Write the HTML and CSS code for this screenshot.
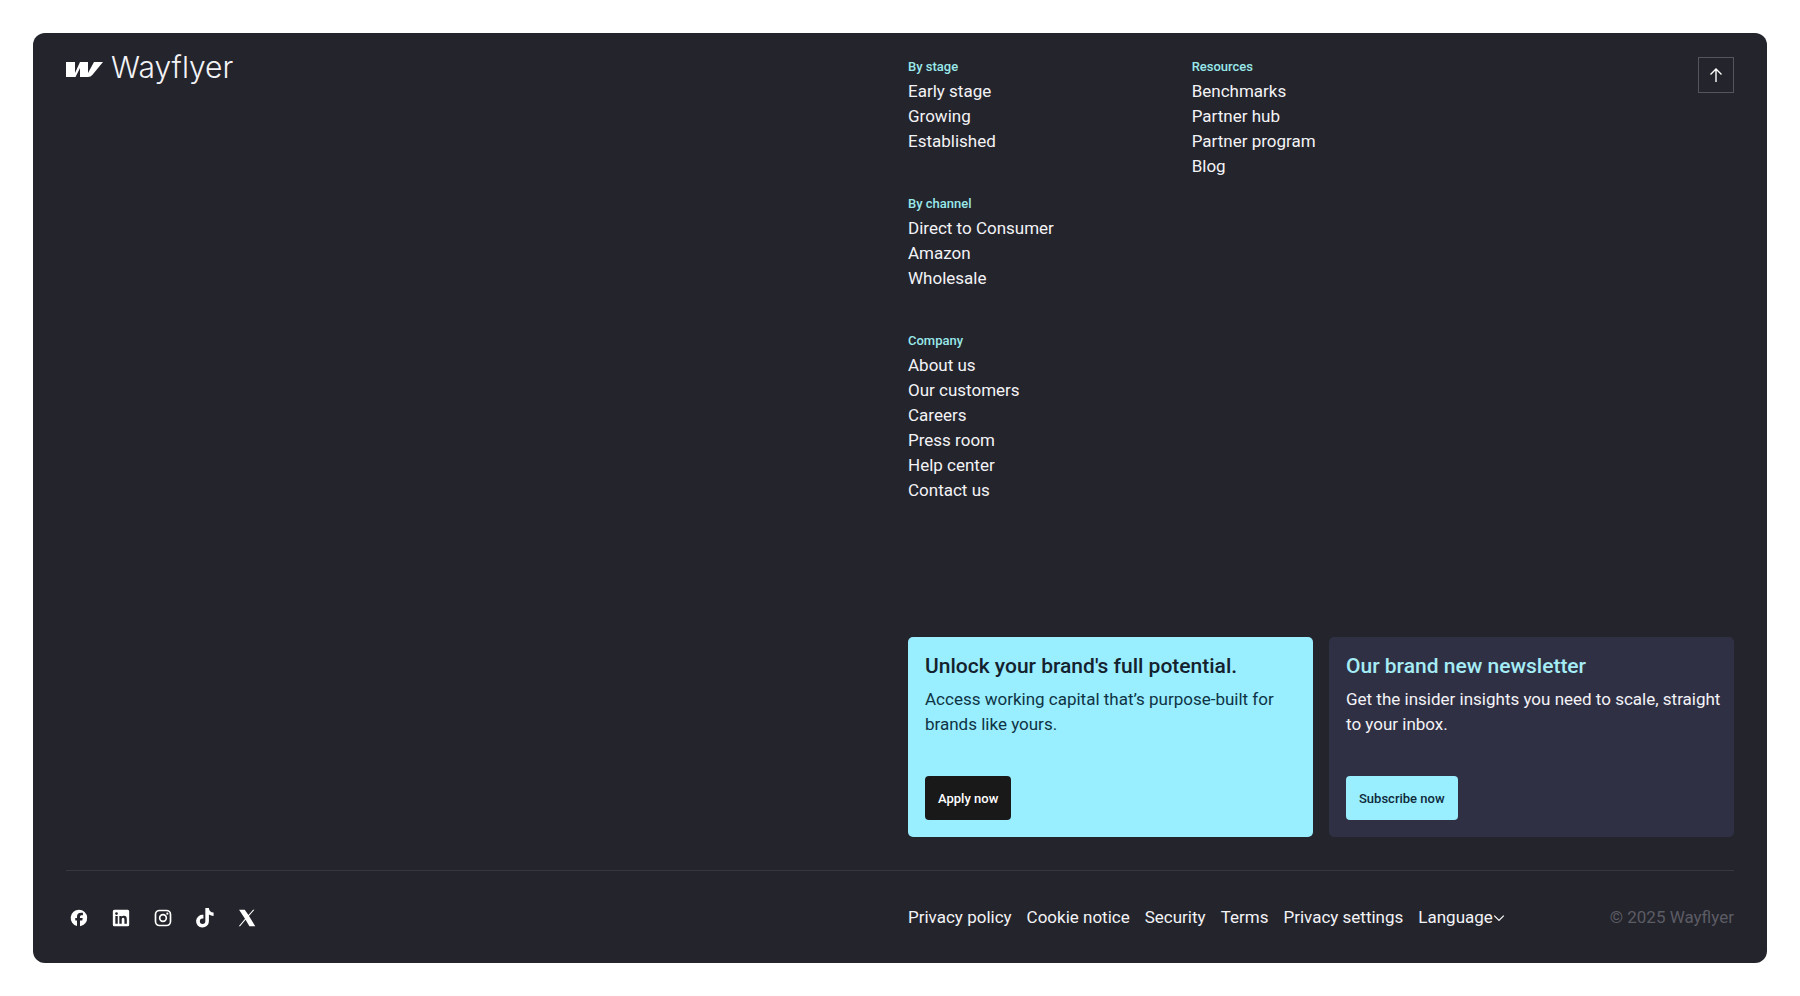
FILE: index.html
```html
<!DOCTYPE html>
<html lang="en">
<head>
  <meta charset="UTF-8">
  <meta name="viewport" content="width=device-width, initial-scale=1.0">
  <title>Wayflyer</title>
  <link rel="stylesheet" href="styles.css">
</head>
<body>
  <footer class="footer">
    <div class="footer-main">
      <a class="logo" href="#">
        <svg class="logo-mark" viewBox="0 0 37 15" aria-hidden="true">
          <path d="M0 0h9v11L14 0h8v11L28 0h9L26.500 12.800Q24.700 15 22 15h-8V6L9.500 15H0z"/>
        </svg>
        <span class="logo-text">Wayflyer</span>
      </a>

      <div class="footer-content">
        <div class="footer-nav">
          <nav class="nav-column">
            <div class="nav-group">
              <h2>By stage</h2>
              <ul>
                <li><a href="#">Early stage</a></li>
                <li><a href="#">Growing</a></li>
                <li><a href="#">Established</a></li>
              </ul>
            </div>
            <div class="nav-group">
              <h2>By channel</h2>
              <ul>
                <li><a href="#">Direct to Consumer</a></li>
                <li><a href="#">Amazon</a></li>
                <li><a href="#">Wholesale</a></li>
              </ul>
            </div>
            <div class="nav-group">
              <h2>Company</h2>
              <ul>
                <li><a href="#">About us</a></li>
                <li><a href="#">Our customers</a></li>
                <li><a href="#">Careers</a></li>
                <li><a href="#">Press room</a></li>
                <li><a href="#">Help center</a></li>
                <li><a href="#">Contact us</a></li>
              </ul>
            </div>
          </nav>
          <nav class="nav-column">
            <div class="nav-group">
              <h2>Resources</h2>
              <ul>
                <li><a href="#">Benchmarks</a></li>
                <li><a href="#">Partner hub</a></li>
                <li><a href="#">Partner program</a></li>
                <li><a href="#">Blog</a></li>
              </ul>
            </div>
          </nav>
          <button type="button" class="to-top" aria-label="Back to top">
            <svg viewBox="0 0 16 16" aria-hidden="true"><path d="M8 15V2M2.500 7.500 8 2l5.500 5.500"/></svg>
          </button>
        </div>

        <div class="cards">
          <section class="card card-apply">
            <h3>Unlock your brand's full potential.</h3>
            <p>Access working capital that’s purpose-built for brands like yours.</p>
            <button type="button" class="btn btn-dark">Apply now</button>
          </section>
          <section class="card card-newsletter">
            <h3>Our brand new newsletter</h3>
            <p>Get the insider insights you need to scale, straight to your inbox.</p>
            <button type="button" class="btn btn-cyan">Subscribe now</button>
          </section>
        </div>
      </div>
    </div>

    <div class="footer-bottom">
      <div class="social">
        <a href="#" aria-label="Facebook">
          <svg viewBox="0 0 24 24"><path d="M12 2a10 10 0 0 0-2.400 19.700v-6.600H7.500V12h2.100v-1.400c0-3.500 1.600-5 5-5 .6 0 1.700.1 2.100.2v2.900h-1.200c-1.700 0-2.300.6-2.300 2.300v1h3.300l-.6 3.100h-2.700v6.800A10 10 0 0 0 12 2z"/></svg>
        </a>
        <a href="#" aria-label="LinkedIn">
          <svg viewBox="0 0 24 24"><path fill-rule="evenodd" d="M4 2.200h16A1.800 1.800 0 0 1 21.800 4v16a1.800 1.800 0 0 1-1.800 1.800H4A1.800 1.800 0 0 1 2.200 20V4A1.800 1.800 0 0 1 4 2.200zM5.200 9.600v9.200h2.900V9.600zM6.600 5a1.700 1.700 0 1 0 0 3.400 1.700 1.700 0 0 0 0-3.400zM10 9.600v9.200h2.900v-4.600c0-1.300.3-2.400 1.700-2.400s1.500 1.300 1.500 2.500v4.500H19v-5.100c0-2.500-.6-4.400-3.500-4.400-1.300 0-2.300.7-2.700 1.500V9.600z"/></svg>
        </a>
        <a href="#" aria-label="Instagram">
          <svg viewBox="0 0 24 24"><path fill-rule="evenodd" d="M7.800 2h8.400A5.800 5.800 0 0 1 22 7.800v8.400a5.800 5.800 0 0 1-5.800 5.800H7.800A5.800 5.800 0 0 1 2 16.200V7.800A5.800 5.800 0 0 1 7.800 2zm0 2A3.800 3.800 0 0 0 4 7.800v8.400A3.800 3.800 0 0 0 7.800 20h8.400a3.800 3.800 0 0 0 3.800-3.800V7.800A3.800 3.800 0 0 0 16.200 4zM12 7a5 5 0 1 1 0 10 5 5 0 0 1 0-10zm0 2a3 3 0 1 0 0 6 3 3 0 0 0 0-6z"/><circle cx="17.200" cy="6.800" r="1.300"/></svg>
        </a>
        <a href="#" aria-label="TikTok">
          <svg viewBox="0 0 24 24"><path d="M16.700 0h-4.300v15.800a3.300 3.300 0 1 1-3.300-3.300c.4 0 .7 0 1 .1V8.200a7.700 7.700 0 1 0 6.600 7.600V7.700a9.800 9.800 0 0 0 5.600 1.800V5.300A5.600 5.600 0 0 1 16.700 0z"/></svg>
        </a>
        <a href="#" aria-label="X">
          <svg viewBox="0 0 24 24"><path d="M2.500 2.200h6.800l4.400 6.200 5.600-6.200h1.600l-6.500 7.300 7.500 12.300h-7L10.300 14l-6.600 7.800H2.100l7.500-8.900z"/></svg>
        </a>
      </div>

      <div class="footer-legal">
        <nav class="legal-links">
          <a href="#">Privacy policy</a>
          <a href="#">Cookie notice</a>
          <a href="#">Security</a>
          <a href="#">Terms</a>
          <a href="#">Privacy settings</a>
          <label class="language">
            <select aria-label="Language">
              <option>Language</option>
            </select>
            <svg viewBox="0 0 10 10" aria-hidden="true"><path d="M1 3l4 4 4-4"/></svg>
          </label>
        </nav>
        <span class="copyright">© 2025 Wayflyer</span>
      </div>
    </div>
  </footer>
</body>
</html>
```
FILE: styles.css
```css
* {
  box-sizing: border-box;
}
body {
  margin: 0;
  padding: 33px;
  min-height: 100vh;
  display: flex;
  background-color: #fff;
  font-family: Roboto, "Liberation Sans", sans-serif;
  font-size: 17px;
  line-height: 25px;
  color: #f3f3f6;
}
h2, h3, p, ul {
  margin: 0;
  padding: 0;
}
ul {
  list-style: none;
}
a {
  color: inherit;
  text-decoration: none;
}
a:hover {
  text-decoration: underline;
}
button, select {
  font-family: inherit;
  cursor: pointer;
}

.footer {
  flex: 1;
  display: flex;
  flex-direction: column;
  padding: 21px 33px 0;
  border-radius: 12px;
  background-color: #24242c;
}
.footer-main {
  flex: 1;
  display: grid;
  grid-template-columns: 1fr 1fr;
  gap: 16px;
  padding-bottom: 33px;
  border-bottom: 1px solid #37373f;
}

/* logo */
.logo {
  display: flex;
  align-items: flex-start;
  align-self: start;
  gap: 8px;
}
.logo-mark {
  width: 37px;
  height: 15px;
  margin-top: 8px;
  fill: #fff;
}
.logo-text {
  font-family: Inter, sans-serif;
  font-size: 30px;
  font-weight: 300;
  line-height: 26px;
}

/* links */
.footer-content {
  display: flex;
  flex-direction: column;
  justify-content: space-between;
}
.footer-nav {
  display: grid;
  grid-template-columns: repeat(3, 1fr);
  gap: 25px;
}
.nav-column {
  display: flex;
  flex-direction: column;
  gap: 37px;
}
.nav-group h2 {
  font-size: 13px;
  font-weight: 500;
  line-height: 25px;
  color: #99e8ea;
}
.to-top {
  display: flex;
  align-items: center;
  justify-content: center;
  justify-self: end;
  width: 36px;
  height: 36px;
  margin-top: 3px;
  padding: 0;
  border: 1px solid #55555e;
  background: none;
}
.to-top svg {
  width: 16px;
  height: 16px;
  fill: none;
  stroke: #fff;
  stroke-width: 1.4;
}

/* cards */
.cards {
  display: grid;
  grid-template-columns: 1fr 1fr;
  gap: 16px;
}
.card {
  display: flex;
  flex-direction: column;
  align-items: flex-start;
  padding: 17px 8px 17px 17px;
  border-radius: 5px;
}
.card h3 {
  margin-bottom: 8px;
  font-size: 21px;
  font-weight: 500;
  line-height: 25px;
}
.card p {
  margin-bottom: 39px;
}
.card-apply {
  background-color: #99eeff;
  color: #0e3444;
}
.card-apply h3 {
  color: #14222e;
}
.card-newsletter {
  background-color: #303045;
}
.card-newsletter h3 {
  color: #a5ecf5;
}
.btn {
  height: 44px;
  padding: 0 13px;
  border: none;
  border-radius: 4px;
  font-size: 13px;
  font-weight: 500;
}
.btn-dark {
  background-color: #191919;
  color: #fff;
}
.btn-cyan {
  background-color: #99eeff;
  color: #0e2a3a;
}

/* bottom bar */
.footer-bottom {
  display: grid;
  grid-template-columns: 1fr 1fr;
  gap: 16px;
  padding: 34px 0 33px;
}
.social {
  display: flex;
  gap: 17px;
}
.social a {
  display: flex;
  align-items: center;
  justify-content: center;
  width: 25px;
  height: 25px;
}
.social svg {
  width: 20px;
  height: 20px;
  fill: #fff;
}
.footer-legal {
  display: flex;
  justify-content: space-between;
  white-space: nowrap;
}
.legal-links {
  display: flex;
  gap: 15px;
}
.language {
  display: flex;
  align-items: center;
}
.language select {
  appearance: none;
  padding: 0;
  border: none;
  background: none;
  color: inherit;
  font-size: 17px;
  line-height: 25px;
}
.language svg {
  width: 12px;
  height: 12px;
  fill: none;
  stroke: #fff;
  stroke-width: 1;
}
.copyright {
  color: #5c5c65;
}
```
